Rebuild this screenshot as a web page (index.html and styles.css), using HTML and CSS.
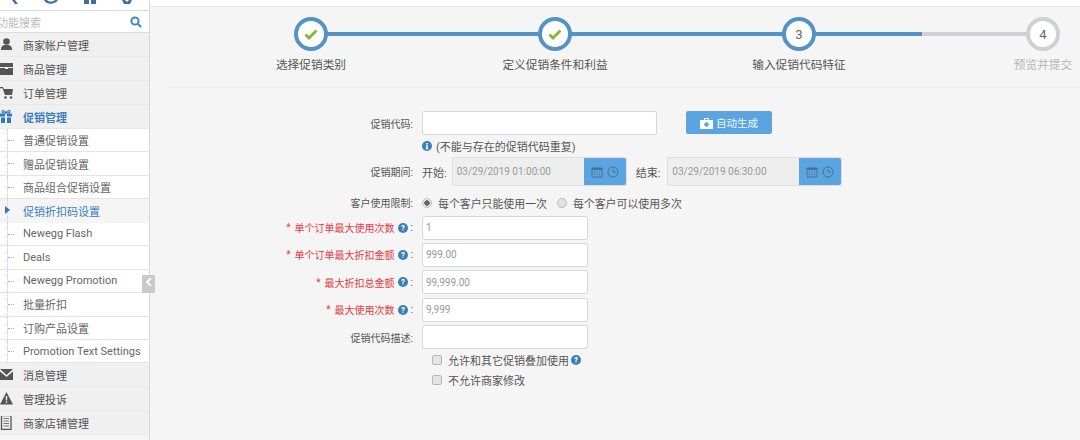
FILE: index.html
```html
<!DOCTYPE html>
<html>
<head>
  <title>促销折扣码设置</title>
  <link rel="stylesheet" href="styles.css">
</head>
<body>
  <aside class="sidebar">
    <div class="quick-icons">
      <svg width="6" height="4" viewBox="0 0 6 4"><path d="M0 0h3l3 4H3z" fill="#3f6f9c"/></svg>
      <svg width="14" height="4" viewBox="0 0 14 4"><path d="M0 0c2 5 11 5 14 0h-3c-2 2-6 2-8 0z" fill="#3f6f9c"/></svg>
      <svg width="12" height="4" viewBox="0 0 12 4"><path d="M0 0h5v4H0zM7 0h5v4H7z" fill="#3f6f9c"/></svg>
      <svg width="10" height="4" viewBox="0 0 10 4"><path d="M0 0h3l2 2 2-2h3L8 4H2z" fill="#3f6f9c"/></svg>
    </div>
    <div class="search-box">
      <span class="search-text">功能搜索</span>
      <svg class="search-icon" width="12" height="12" viewBox="0 0 12 12"><circle cx="5" cy="5" r="3.6" fill="none" stroke="#3f86c4" stroke-width="2"/><path d="M8 8l3 3" stroke="#3f86c4" stroke-width="2.2"/></svg>
    </div>
    <ul class="menu">
      <li class="menu-item">
        <svg class="menu-icon" viewBox="0 0 14 14"><circle cx="6.500" cy="3.500" r="3.300" fill="#555"/><path d="M1 12c0-3.500 1.500-4.500 3.500-5h4c2 .5 3.500 1.500 3.500 5z" fill="#555"/></svg>
        商家帐户管理
      </li>
      <li class="menu-item">
        <svg class="menu-icon" viewBox="0 0 14 14"><path d="M0 1h13v4H0zM0 6h5v1h3V6h5v7H0z" fill="#555"/></svg>
        商品管理
      </li>
      <li class="menu-item">
        <svg class="menu-icon" viewBox="0 0 14 14"><path d="M0 1h3l.8 2H13l-1 6H5L2.500 2.200H0z" fill="#555"/><circle cx="5.500" cy="11.500" r="1.300" fill="#555"/><circle cx="11" cy="11.500" r="1.300" fill="#555"/></svg>
        订单管理
      </li>
      <li class="menu-item active">
        <svg class="menu-icon" viewBox="0 0 14 14"><path d="M0 3.500h5v3H0zM7 3.500h5v3H7zM1 7.500h4V13H1zM7 7.500h4V13H7z" fill="#2f78bd"/><path d="M6 3C5 .5 2 0 2 1.700 2 3 4 3 6 3c2 0 4 0 4-1.300C10 0 7 .5 6 3z" fill="none" stroke="#2f78bd" stroke-width="1.200"/></svg>
        促销管理
      </li>
      <li class="sub-item">普通促销设置</li>
      <li class="sub-item">赠品促销设置</li>
      <li class="sub-item">商品组合促销设置</li>
      <li class="sub-item current">促销折扣码设置</li>
      <li class="sub-item">Newegg Flash</li>
      <li class="sub-item">Deals</li>
      <li class="sub-item">Newegg Promotion</li>
      <li class="sub-item">批量折扣</li>
      <li class="sub-item">订购产品设置</li>
      <li class="sub-item">Promotion Text Settings</li>
      <li class="menu-item">
        <svg class="menu-icon" viewBox="0 0 14 14"><path d="M0 1h13L6.500 7zM0 3.500l6.500 5.500L13 3.500V12H0z" fill="#555"/></svg>
        消息管理
      </li>
      <li class="menu-item">
        <svg class="menu-icon" viewBox="0 0 14 14"><path d="M6.500 0L13 12.500H0z" fill="#555"/><path d="M5.800 4h1.400v4.500H5.800zM5.800 9.500h1.400v1.500H5.800z" fill="#eee"/></svg>
        管理投诉
      </li>
      <li class="menu-item">
        <svg class="menu-icon" viewBox="0 0 14 14"><path d="M1.500 -.5h9.500v14H1.500z" fill="none" stroke="#555" stroke-width="1.300"/><path d="M3.500 2.500h5.500M3.500 5h5.500M3.500 7.500h5.500M3.500 10h5.500" stroke="#777"/></svg>
        商家店铺管理
      </li>
    </ul>
    <div class="collapse-handle">
      <svg width="6" height="8" viewBox="0 0 6 8"><path d="M5 0L1 4l4 4" fill="none" stroke="#fff" stroke-width="2"/></svg>
    </div>
  </aside>

  <main class="content">
    <div class="topbar"></div>

    <div class="steps">
      <div class="step done">
        <div class="circle">
          <svg width="14" height="11" viewBox="0 0 14 11"><path d="M1.500 5.500l3.500 3.500 7.500-7.500" fill="none" stroke="#86b52f" stroke-width="2.800"/></svg>
        </div>
        <div class="step-label">选择促销类别</div>
      </div>
      <div class="step done">
        <div class="circle">
          <svg width="14" height="11" viewBox="0 0 14 11"><path d="M1.500 5.500l3.500 3.500 7.500-7.500" fill="none" stroke="#86b52f" stroke-width="2.800"/></svg>
        </div>
        <div class="step-label">定义促销条件和利益</div>
      </div>
      <div class="step now">
        <div class="circle">3</div>
        <div class="step-label">输入促销代码特征</div>
      </div>
      <div class="step todo">
        <div class="circle">4</div>
        <div class="step-label">预览并提交</div>
      </div>
    </div>

    <form class="promo-form">
      <div class="row row-code">
        <label class="field-label">促销代码:</label>
        <input class="text-input wide" type="text">
        <button class="auto-btn" type="button">
          <svg width="13" height="12" viewBox="0 0 13 12"><path d="M0 3h13v9H0zM4 3V1h5v2H8V2H5v1z" fill="#fff"/><path d="M5.500 5h2v1.500H9v2H7.500V10h-2V8.500H4v-2h1.500z" fill="#5aa5e0"/></svg>
          自动生成
        </button>
      </div>
      <div class="row row-hint">
        <span class="field-label"></span>
        <svg class="help" viewBox="0 0 10 10"><circle cx="5" cy="5" r="5" fill="#3c7fb8"/><path d="M4.200 2h1.600v1.400H4.200zM3.800 4.200h2v3.200h.6v.8H3.700v-.8h.6V5h-.5z" fill="#fff"/></svg>
        <span class="hint-text">(不能与存在的促销代码重复)</span>
      </div>
      <div class="row row-period">
        <label class="field-label">促销期间:</label>
        <span class="range-label">开始:</span>
        <div class="date-group">
          <div class="date-value">03/29/2019 01:00:00</div>
          <div class="date-btn">
            <svg width="12" height="12" viewBox="0 0 12 12"><path d="M1 2h10v9H1z" fill="none" stroke="#4f6f8e"/><path d="M1 2h10v2H1zM3 5.500h1v1H3zM5.500 5.500h1v1h-1zM8 5.500h1v1H8zM3 8h1v1H3zM5.500 8h1v1h-1zM8 8h1v1H8z" fill="#4f6f8e"/></svg>
            <svg width="12" height="12" viewBox="0 0 12 12"><circle cx="6" cy="6" r="5" fill="none" stroke="#4f6f8e"/><path d="M6 3v3h3" fill="none" stroke="#4f6f8e"/></svg>
          </div>
        </div>
        <span class="range-label end">结束:</span>
        <div class="date-group">
          <div class="date-value">03/29/2019 06:30:00</div>
          <div class="date-btn">
            <svg width="12" height="12" viewBox="0 0 12 12"><path d="M1 2h10v9H1z" fill="none" stroke="#4f6f8e"/><path d="M1 2h10v2H1zM3 5.500h1v1H3zM5.500 5.500h1v1h-1zM8 5.500h1v1H8zM3 8h1v1H3zM5.500 8h1v1h-1zM8 8h1v1H8z" fill="#4f6f8e"/></svg>
            <svg width="12" height="12" viewBox="0 0 12 12"><circle cx="6" cy="6" r="5" fill="none" stroke="#4f6f8e"/><path d="M6 3v3h3" fill="none" stroke="#4f6f8e"/></svg>
          </div>
        </div>
      </div>
      <div class="row row-radio">
        <label class="field-label">客户使用限制:</label>
        <span class="radio checked"></span>
        <span class="radio-text">每个客户只能使用一次</span>
        <span class="radio"></span>
        <span class="radio-text">每个客户可以使用多次</span>
      </div>
      <div class="row row-input">
        <label class="field-label required"><em>*</em>单个订单最大使用次数
          <svg class="help" viewBox="0 0 10 10"><circle cx="5" cy="5" r="5" fill="#3c7fb8"/><path d="M3.200 3.800C3.300 1.600 6.800 1.600 6.800 3.600c0 1.300-1.300 1.300-1.300 2.300H4.400c0-1.500 1.200-1.600 1.200-2.300 0-.7-1.200-.7-1.300.2zM4.400 6.600h1.100v1.200H4.400z" fill="#fff"/></svg><span class="colon">:</span></label>
        <input class="text-input" type="text" value="1">
      </div>
      <div class="row row-input">
        <label class="field-label required"><em>*</em>单个订单最大折扣金额
          <svg class="help" viewBox="0 0 10 10"><circle cx="5" cy="5" r="5" fill="#3c7fb8"/><path d="M3.200 3.800C3.300 1.600 6.800 1.600 6.800 3.600c0 1.300-1.300 1.300-1.300 2.300H4.400c0-1.500 1.200-1.600 1.200-2.300 0-.7-1.200-.7-1.300.2zM4.400 6.600h1.100v1.200H4.400z" fill="#fff"/></svg><span class="colon">:</span></label>
        <input class="text-input" type="text" value="999.00">
      </div>
      <div class="row row-input">
        <label class="field-label required"><em>*</em>最大折扣总金额
          <svg class="help" viewBox="0 0 10 10"><circle cx="5" cy="5" r="5" fill="#3c7fb8"/><path d="M3.200 3.800C3.300 1.600 6.800 1.600 6.800 3.600c0 1.300-1.300 1.300-1.300 2.300H4.400c0-1.500 1.200-1.600 1.200-2.300 0-.7-1.200-.7-1.300.2zM4.400 6.600h1.100v1.200H4.400z" fill="#fff"/></svg><span class="colon">:</span></label>
        <input class="text-input" type="text" value="99,999.00">
      </div>
      <div class="row row-input">
        <label class="field-label required"><em>*</em>最大使用次数
          <svg class="help" viewBox="0 0 10 10"><circle cx="5" cy="5" r="5" fill="#3c7fb8"/><path d="M3.200 3.800C3.300 1.600 6.800 1.600 6.800 3.600c0 1.300-1.300 1.300-1.300 2.300H4.400c0-1.500 1.200-1.600 1.200-2.300 0-.7-1.200-.7-1.300.2zM4.400 6.600h1.100v1.200H4.400z" fill="#fff"/></svg><span class="colon">:</span></label>
        <input class="text-input" type="text" value="9,999">
      </div>
      <div class="row row-input">
        <label class="field-label">促销代码描述:</label>
        <input class="text-input" type="text">
      </div>
      <div class="row row-check first">
        <span class="check"></span>
        <span class="check-text">允许和其它促销叠加使用</span>
        <svg class="help" viewBox="0 0 10 10"><circle cx="5" cy="5" r="5" fill="#3c7fb8"/><path d="M3.200 3.800C3.300 1.600 6.800 1.600 6.800 3.600c0 1.300-1.300 1.300-1.300 2.300H4.400c0-1.500 1.200-1.600 1.200-2.300 0-.7-1.200-.7-1.300.2zM4.400 6.600h1.100v1.200H4.400z" fill="#fff"/></svg>
      </div>
      <div class="row row-check">
        <span class="check"></span>
        <span class="check-text">不允许商家修改</span>
      </div>
    </form>
  </main>
</body>
</html>
```

FILE: styles.css
```css
* {
    box-sizing: border-box;
}

body {
    margin: 0;
    display: flex;
    height: 440px;
    overflow: hidden;
    background-color: #f5f5f5;
    color: #555;
    font-family: "Roboto", "Noto Sans CJK SC", sans-serif;
    font-size: 11px;
}

/* sidebar */
.sidebar {
    position: relative;
    flex: 0 0 150px;
    width: 150px;
    background-color: #f5f5f5;
    border-right: 1px solid #d8d8d8;
}

.quick-icons {
    display: flex;
    justify-content: space-between;
    height: 10px;
    padding: 0 17px 0 12px;
    background-color: #fff;
}

.search-box {
    display: flex;
    justify-content: space-between;
    align-items: center;
    height: 23px;
    padding-right: 7px;
    background-color: #fff;
    border-top: 1px solid #d8dde3;
    border-bottom: 1px solid #ddd;
    overflow: hidden;
}

.search-text {
    margin-left: -3px;
    color: #bbb;
    font-size: 11px;
}

.menu {
    list-style: none;
    margin: 0;
    padding: 0;
}

.menu-item {
    display: flex;
    align-items: center;
    height: 24px;
    padding-left: 23px;
    position: relative;
    background-color: #f0f0f0;
    border-bottom: 1px solid #e8e8e8;
    color: #555;
}

.menu-item.active {
    color: #3a80c0;
    font-weight: bold;
}

.menu-icon {
    position: absolute;
    left: 0;
    top: 5px;
    width: 14px;
    height: 14px;
}

.sub-item {
    display: flex;
    align-items: center;
    height: 23.450px;
    padding-left: 23px;
    position: relative;
    background-color: #fff;
    border-bottom: 1px solid #e4e4e4;
    color: #666;
}

.sub-item::before {
    content: "";
    position: absolute;
    left: 7px;
    top: 0;
    bottom: 0;
    border-left: 1px dotted #bcd3e6;
}

.sub-item::after {
    content: "";
    position: absolute;
    left: 8px;
    top: 11px;
    width: 6px;
    border-top: 1px dotted #aaa;
}

.sub-item.current {
    background-color: #f5f5f5;
    color: #3a80c0;
    border-bottom: none;
}

.sub-item.current::after {
    left: 5px;
    top: 7px;
    width: 0;
    border-top: 4.500px solid transparent;
    border-bottom: 4.500px solid transparent;
    border-left: 5px solid #2f78bd;
}

.collapse-handle {
    position: absolute;
    left: 142px;
    top: 275px;
    display: flex;
    justify-content: center;
    padding-top: 3px;
    width: 13px;
    height: 18px;
    background-color: #c9c9c9;
}

/* main */
.content {
    flex: 1;
    min-width: 0;
}

.topbar {
    height: 7px;
    background-color: #fff;
    border-bottom: 1px solid #e6e6e6;
}

.steps {
    display: flex;
    height: 81px;
    margin-left: 18px;
    padding-left: 143px;
    border-bottom: 1px solid #ececec;
}

.step {
    position: relative;
    flex: 0 0 244px;
    height: 60px;
}

.step::before {
    content: "";
    position: absolute;
    left: 0;
    top: 25px;
    width: 244px;
    height: 3.500px;
    background-color: #5493c4;
}

.step.now::before {
    width: 123px;
}

.step.now::after {
    content: "";
    position: absolute;
    left: 123px;
    top: 25px;
    width: 122px;
    height: 3.500px;
    background-color: #ced0d6;
}

.step.todo::before {
    display: none;
}

.circle {
    position: absolute;
    left: -17px;
    top: 10px;
    display: flex;
    justify-content: center;
    align-items: center;
    width: 34px;
    height: 34px;
    background-color: #fff;
    border: 4px solid #5493c4;
    border-radius: 50%;
    font-size: 13px;
    color: #666;
}

.step.todo .circle {
    border-color: #ced0d6;
}

.step-label {
    position: absolute;
    left: -60px;
    top: 48px;
    width: 120px;
    display: flex;
    justify-content: center;
    font-size: 11.700px;
    white-space: nowrap;
    color: #555;
}

.step.todo .step-label {
    color: #b5b5b5;
}

/* form */
.promo-form {
    padding-top: 23px;
    font-size: 10px;
}

.row {
    display: flex;
    align-items: center;
}

.field-label {
    display: flex;
    justify-content: flex-end;
    align-items: center;
    flex: 0 0 263px;
    width: 263px;
    margin-right: 9px;
    color: #555;
    white-space: nowrap;
}

.field-label.required {
    color: #e8383d;
}

.field-label em {
    margin-right: 4px;
    font-style: normal;
}

.field-label .help {
    margin: 0 3px 0 3px;
}

.colon {
    color: #555;
}

.text-input {
    width: 166px;
    height: 24px;
    padding: 0 3px;
    background-color: #fff;
    border: 1px solid #d6d8e0;
    border-radius: 2px;
    color: #999;
    font-family: "Roboto", sans-serif;
    font-size: 10px;
}

.text-input.wide {
    width: 235px;
}

.auto-btn {
    display: flex;
    justify-content: center;
    align-items: center;
    gap: 3px;
    width: 86px;
    height: 23px;
    margin: -1px 0 0 29px;
    padding: 0;
    background-color: #5aa5e0;
    border: none;
    border-radius: 2px;
    color: #eef6fc;
    font-family: inherit;
    font-size: 10.500px;
}

.row-hint {
    height: 22px;
    color: #555;
    font-size: 11px;
}

.help {
    flex: none;
    width: 10px;
    height: 10px;
}

.row-hint .help {
    margin-right: 4px;
}

.row-period {
    height: 29px;
}

.range-label {
    margin-right: 5px;
    font-size: 11px;
}

.range-label.end {
    margin: 0 7px 0 9px;
}

.date-group {
    display: flex;
    width: 175px;
    height: 29px;
    background-color: #eee;
    border: 1px solid #dedede;
    border-radius: 2px;
}

.date-value {
    flex: 1;
    padding-left: 4px;
    line-height: 27px;
    color: #999;
    font-size: 10px;
}

.date-btn {
    display: flex;
    align-items: center;
    justify-content: center;
    gap: 4px;
    width: 42px;
    background-color: #5aa5e0;
    border-radius: 0 2px 2px 0;
}

.row-radio {
    height: 29.500px;
    padding-top: 4px;
}

.radio {
    width: 10px;
    height: 10px;
    margin-right: 6px;
    background-color: #e2e2e2;
    border: 1px solid #bbb;
    border-radius: 50%;
}

.radio.checked {
    background: radial-gradient(circle, #666 0, #666 2.500px, #eee 3px);
}

.radio-text {
    margin-right: 10px;
    font-size: 10.900px;
}

.row-input {
    margin-bottom: 3.400px;
}

.row-check {
    height: 20px;
    padding-left: 282px;
    font-size: 11px;
}

.row-check.first {
    margin-top: -2px;
}

.check {
    width: 10px;
    height: 10px;
    margin-right: 6px;
    background-color: #e4e4e4;
    border: 1px solid #b8b8b8;
    border-radius: 2px;
}

.row-check .help {
    margin-left: 2px;
}
```
